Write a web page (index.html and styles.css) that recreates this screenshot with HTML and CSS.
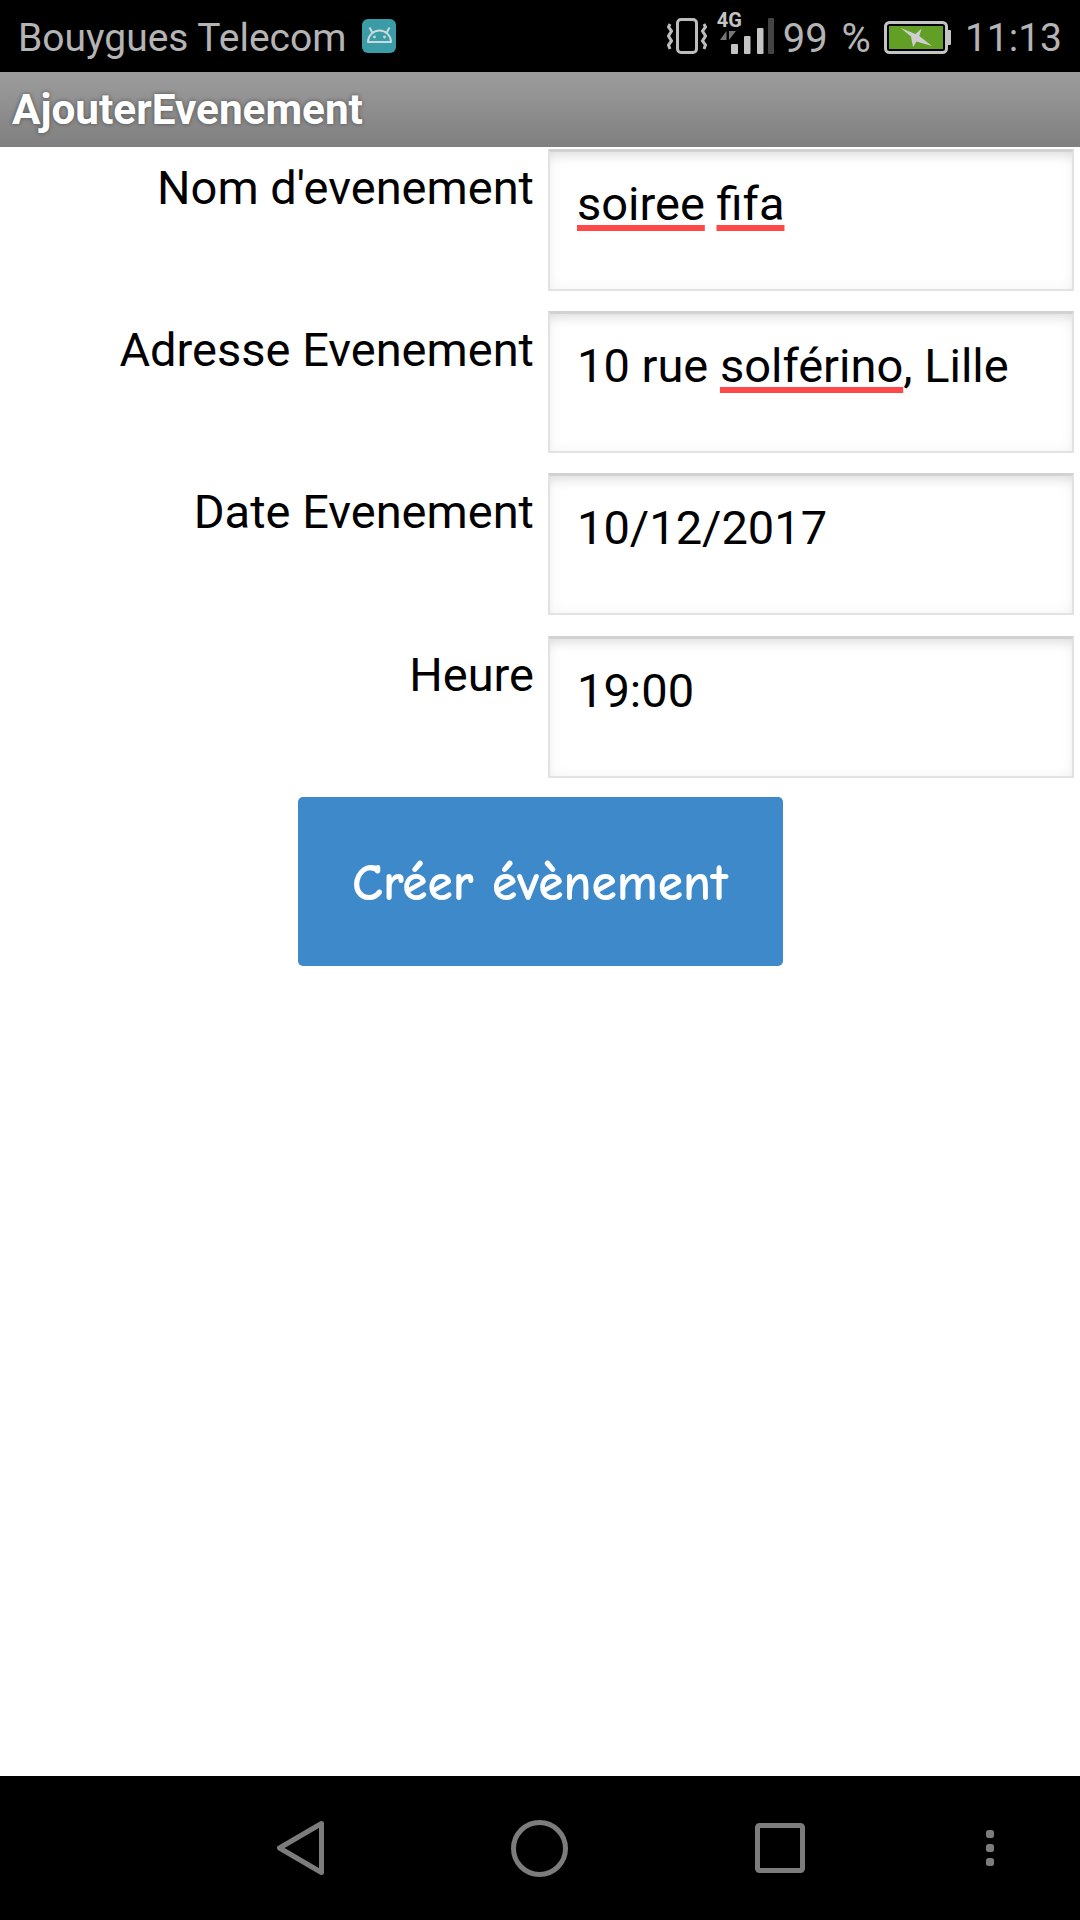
FILE: index.html
```html
<!DOCTYPE html>
<html lang="fr">
<head>
<meta charset="utf-8">
<title>AjouterEvenement</title>
<link rel="stylesheet" href="styles.css">
</head>
<body>
<div class="screen">
  <header class="status">
    <span class="carrier">Bouygues Telecom</span>
    <svg class="app-badge" width="34" height="34" viewBox="0 0 34 34">
      <rect width="34" height="34" rx="6" fill="#3a9ca6"/>
      <path d="M6 23a11.500 11.500 0 0 1 23 0z" fill="none" stroke="#c8dadc" stroke-width="2" stroke-linejoin="round"/>
      <path d="M10.500 14 7.500 8.500M24.500 14l3-5.500" stroke="#c8dadc" stroke-width="2"/>
      <circle cx="12.500" cy="18" r="1.400" fill="#c8dadc"/>
      <circle cx="22.500" cy="18" r="1.400" fill="#c8dadc"/>
    </svg>
    <span class="status-spacer"></span>
    <svg class="vibrate" width="40" height="36" viewBox="0 0 40 36">
      <rect x="10.500" y="1.500" width="19" height="33" rx="3.500" fill="none" stroke="#bdbdbd" stroke-width="3"/>
      <path d="M3 6 1.500 9 4.500 13 1.500 18 4.500 23 1.500 27 3 31M37 6l1.500 3-3 4 3 5-3 5 3 4-1.500 4" fill="none" stroke="#bdbdbd" stroke-width="3"/>
    </svg>
    <div class="network">
      <span class="net-label">4G</span>
      <svg class="net-bars" width="58" height="42" viewBox="0 0 58 42">
        <path d="M10.500 19v9H4zM13 19v9l7-9z" fill="#777"/>
        <rect x="15" y="32" width="7" height="10" rx="1" fill="#c4c4c4"/>
        <rect x="28" y="24" width="6.500" height="18" rx="1" fill="#c4c4c4"/>
        <rect x="41" y="16" width="6.500" height="26" rx="1" fill="#c4c4c4"/>
        <rect x="52" y="6" width="6" height="36" rx="1" fill="#444"/>
      </svg>
    </div>
    <span class="battery-pct">99 %</span>
    <svg class="battery" width="68" height="34" viewBox="0 0 68 34">
      <rect x="1.500" y="1.500" width="61" height="30" rx="4" fill="none" stroke="#c4c4c4" stroke-width="3"/>
      <rect x="5" y="5" width="54" height="23" fill="#629f25"/>
      <rect x="63" y="9" width="4" height="15" rx="1" fill="#c4c4c4"/>
      <path d="M16.700 7 31.500 13 37.700 7.500 35.300 15 48 25 32.500 20.500 29 26 27 15.500z" fill="#cfcfcf"/>
    </svg>
    <span class="clock">11:13</span>
  </header>

  <div class="actionbar">AjouterEvenement</div>

  <main class="content">
    <form class="form">
      <label class="field-label">Nom d'evenement</label>
      <div class="field"><span class="typo">soiree</span> <span class="typo">fifa</span></div>
      <label class="field-label">Adresse Evenement</label>
      <div class="field">10 rue <span class="typo">solférino</span>, Lille</div>
      <label class="field-label">Date Evenement</label>
      <div class="field">10/12/2017</div>
      <label class="field-label">Heure</label>
      <div class="field">19:00</div>
    </form>
    <div class="actions">
      <button class="create" type="button">Créer évènement</button>
    </div>
  </main>

  <nav class="navbar">
    <svg class="nav-back" width="50" height="56" viewBox="0 0 50 56">
      <path d="M45.500 3.500 3.500 28 45.500 52.500z" fill="none" stroke="#7c7c7c" stroke-width="5" stroke-linejoin="round"/>
    </svg>
    <svg class="nav-home" width="57" height="57" viewBox="0 0 57 57">
      <circle cx="28.500" cy="28.500" r="26" fill="none" stroke="#7c7c7c" stroke-width="5"/>
    </svg>
    <svg class="nav-recent" width="50" height="50" viewBox="0 0 50 50">
      <rect x="2.500" y="2.500" width="45" height="45" rx="2" fill="none" stroke="#7c7c7c" stroke-width="5"/>
    </svg>
    <svg class="nav-menu" width="8" height="36" viewBox="0 0 8 36">
      <rect width="8" height="8" rx="2.500" fill="#7c7c7c"/>
      <rect y="14" width="8" height="8" rx="2.500" fill="#7c7c7c"/>
      <rect y="28" width="8" height="8" rx="2.500" fill="#7c7c7c"/>
    </svg>
  </nav>
</div>
</body>
</html>
```

FILE: styles.css
```css
* { box-sizing: border-box; }
html, body { margin: 0; padding: 0; }
body { background: #fff; font-family: Roboto, "Liberation Sans", sans-serif; color: #000; }

.screen { width: 1080px; height: 1920px; display: flex; flex-direction: column; overflow: hidden; }

.status {
  height: 72px; flex: none; background: #000; color: #b4b4b4;
  display: flex; align-items: center; padding: 0 18px 0 18px;
  font-size: 39px;
}
.carrier { margin-right: 16px; padding-top: 4px; }
.app-badge { flex: none; }
.status-spacer { flex: 1; }
.vibrate { flex: none; margin-right: 9px; }
.network { position: relative; width: 58px; height: 54px; flex: none; }
.net-label { position: absolute; left: 1px; top: 1px; font-size: 20px; line-height: 20px; font-weight: 700; color: #c4c4c4; }
.net-bars { position: absolute; left: 0; top: 3px; }
.battery-pct { margin-left: 9px; margin-right: 13px; padding-top: 4px; font-size: 40px; word-spacing: 4px; }
.battery { flex: none; margin-top: 4px; }
.clock { margin-left: 13px; padding-top: 4px; }

.actionbar {
  height: 75px; flex: none; display: flex; align-items: center; padding: 0 0 0 12px;
  background: linear-gradient(#9d9d9d, #7f7f7f);
  color: #fff; font-size: 42.300px; font-weight: 700;
  text-shadow: 0 0 4px rgba(0,0,0,.45);
}

.content { flex: 1; display: flex; flex-direction: column; padding-top: 2px; }
.form {
  display: grid; grid-template-columns: 534px 526px; column-gap: 14px; row-gap: 20.200px;
  grid-auto-rows: 142px;
}
.field-label { text-align: right; font-size: 47px; line-height: 56px; padding-top: 11px; }
.field {
  border: 2px solid #e2e2e2; border-top-color: #d2d2d2; border-top-width: 3px;
  box-shadow: inset 0 10px 12px -6px rgba(0,0,0,.1), inset 0 0 14px rgba(0,0,0,.05);
  font-size: 47px; line-height: 56px; padding: 24px 27px; white-space: nowrap;
}
.typo {
  text-decoration: underline #ff4848 6px;
  text-decoration-skip-ink: none; text-underline-offset: 5px;
}

.actions { display: flex; justify-content: center; padding-top: 19px; }
.create {
  width: 485px; height: 169px; border: 0; border-radius: 5px; padding: 4px 0 0;
  background: #3d89ca; color: #fff;
  font-family: "Comic Sans MS", "Comic Neue", "Lato", sans-serif; font-weight: 700; font-size: 51.500px;
}

.navbar { height: 144px; flex: none; background: #000; position: relative; }
.navbar svg { position: absolute; }
.nav-back { left: 276px; top: 44px; }
.nav-home { left: 511px; top: 44px; }
.nav-recent { left: 755px; top: 47px; }
.nav-menu { left: 986px; top: 54px; }
```
